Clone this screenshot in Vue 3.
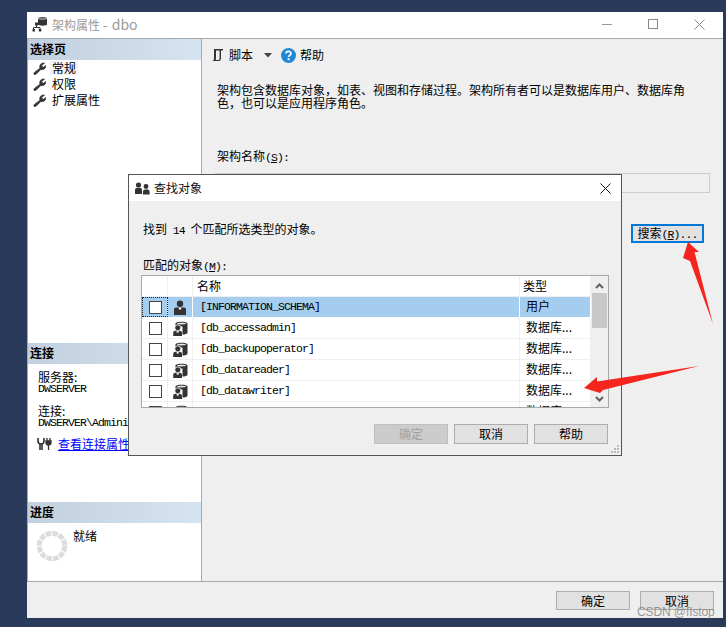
<script setup>
const pages = ['常规', '权限', '扩展属性']
const rows = [
  { name: '[INFORMATION_SCHEMA]', type: '用户', user: true, sel: true },
  { name: '[db_accessadmin]', type: '数据库...' },
  { name: '[db_backupoperator]', type: '数据库...' },
  { name: '[db_datareader]', type: '数据库...' },
  { name: '[db_datawriter]', type: '数据库...' },
  { name: '[db_ddladmin]', type: '数据库...' }
]
const wrench = 'M11.5 1.2 C9.4 .6 7.2 1.8 6.8 3.9 C6.6 4.8 6.8 5.6 7 6.2 L1.4 10.4 C.4 11.2 .9 12.6 2 12.6 C2.6 12.7 3 12.4 3.3 12 L7.9 7.4 C9.6 8 11.6 7.4 12.4 5.8 C12.8 5 12.9 4.1 12.7 3.4 L10.6 5.2 L8.8 4.4 L8.9 3 Z'
</script>

<template>
  <div class="page">
    <div class="window">
      <header class="title">
        <svg class="title-icon" width="16" height="16" viewBox="0 0 16 16">
          <path d="M6 2.2 C6 .8 15 .8 15 2.2 V8.5 C15 10 6 10 6 8.5 Z" fill="#333" />
          <path d="M6 2.2 C6 3.4 15 3.4 15 2.2" fill="none" stroke="#fff" stroke-width=".8" />
          <path d="M4.5 8 V11 M1.5 14 V11.5 H8 V14" fill="none" stroke="#333" />
          <rect x="3" y="6.5" width="3" height="3" fill="#333" />
          <rect x=".5" y="13" width="2.5" height="2.5" fill="#333" />
          <rect x="6.8" y="13" width="2.5" height="2.5" fill="#333" />
        </svg>
        <span class="title-text">架构属性 <span class="title-lat">- dbo</span></span>
        <div class="controls">
          <svg width="11" height="11" viewBox="0 0 11 11"><path d="M0 5.5 H10" stroke="#999" /></svg>
          <svg width="11" height="11" viewBox="0 0 11 11"><rect x=".5" y=".5" width="9" height="9" fill="none" stroke="#888" /></svg>
          <svg width="11" height="11" viewBox="0 0 11 11"><path d="M.5 .5 L10.5 10.5 M10.5 .5 L.5 10.5" stroke="#888" /></svg>
        </div>
      </header>

      <div class="main">
        <aside class="left">
          <section class="sec-pages">
            <h3 class="sec-head">选择页</h3>
            <ul class="page-list">
              <li v-for="(p, i) in pages" :key="p" class="page-item">
                <svg width="13" height="13" viewBox="0 0 13 13"><path :d="wrench" fill="#333" stroke="#333" stroke-width=".7" /></svg>
                <span :class="{ hovered: i === 0 }">{{ p }}</span>
              </li>
            </ul>
          </section>
          <section class="sec-conn">
            <h3 class="sec-head">连接</h3>
            <div class="conn-body">
              <div class="cn">服务器:</div>
              <div class="m">DWSERVER</div>
              <div class="cn conn-gap">连接:</div>
              <div class="m">DWSERVER\Administrator</div>
              <div class="conn-link">
                <svg width="15" height="14" viewBox="0 0 15 14">
                  <path d="M1 1 V4 C1 6 2.5 7 4 7 C5.5 7 7 6 7 4 V1 M3 7 V13 M5 7 V13" fill="none" stroke="#333" stroke-width="1.6" />
                  <path d="M9 4 H14 V5.5 C14 7 13 8 11.5 8 C10 8 9 7 9 5.5 Z M10 1 V4 M13 1 V4 M11.5 8 V13" fill="#333" stroke="#333" stroke-width="1.3" />
                </svg>
                <a class="link">查看连接属性</a>
              </div>
            </div>
          </section>
          <section class="sec-prog">
            <h3 class="sec-head">进度</h3>
            <div class="prog-body">
              <svg width="32" height="32" viewBox="0 0 32 32">
                <circle cx="16" cy="16" r="12.8" fill="none" stroke="#dcdcdc" stroke-width="5" stroke-dasharray="5.5 1.2" />
              </svg>
              <span class="ready">就绪</span>
            </div>
          </section>
        </aside>

        <div class="right">
          <div class="toolbar">
            <svg width="13" height="14" viewBox="0 0 13 14">
              <path d="M3.5 1 H12 V2.5 H10 V10.5 C10 12 9 13 8 13 H1 C2 13 3 12 3 10.5 V2.5 C3 1.5 3 1 3.5 1 Z M5 2.5 V10.5 C5 11 4.8 11.6 4.6 11.9 H7.5 C8.2 11.9 8.6 11.2 8.6 10.5 V2.5 Z" fill="#333" fill-rule="evenodd" />
            </svg>
            <span class="tb-script">脚本</span>
            <svg class="tb-caret" width="8" height="5" viewBox="0 0 8 5"><path d="M0 0 H8 L4 4.5 Z" fill="#444" /></svg>
            <svg class="tb-help" width="15" height="15" viewBox="0 0 15 15">
              <circle cx="7.5" cy="7.5" r="7.5" fill="#1e88d6" />
              <path d="M5 5.6 C5 2.6 10 2.6 10 5.5 C10 7.2 7.6 7.3 7.6 9" fill="none" stroke="#fff" stroke-width="1.8" />
              <rect x="6.6" y="10.2" width="2" height="2" fill="#fff" />
            </svg>
            <span>帮助</span>
          </div>
          <p class="desc">架构包含数据库对象，如表、视图和存储过程。架构所有者可以是数据库用户、数据库角色，也可以是应用程序角色。</p>
          <div class="name-label">架构名称<span class="m">(<u>S</u>):</span></div>
          <div class="name-input"></div>
          <button class="search">搜索<span class="m">(<u>R</u>)...</span></button>
        </div>
      </div>

      <footer class="foot">
        <button class="btn">确定</button>
        <button class="btn">取消</button>
      </footer>
    </div>

    <div class="dialog">
      <header class="dlg-title">
        <svg width="15" height="13" viewBox="0 0 15 13">
          <circle cx="3.5" cy="3" r="2.6" fill="#333" />
          <path d="M0 12 V8 C0 6.5 1 6 2 6 H5 C6 6 7 6.5 7 8 V12 Z" fill="#333" />
          <circle cx="11" cy="4.5" r="2.4" fill="#333" />
          <path d="M8 12.5 V9.5 C8 8.2 9 7.5 10 7.5 H12.5 C13.5 7.5 14.6 8.2 14.6 9.5 V12.5 Z" fill="#333" />
        </svg>
        <span class="dlg-name">查找对象</span>
        <svg class="dlg-close" width="11" height="11" viewBox="0 0 11 11"><path d="M.5 .5 L10.5 10.5 M10.5 .5 L.5 10.5" stroke="#111" /></svg>
      </header>
      <div class="dlg-body">
        <div class="found">找到 <span class="m count">14</span> 个匹配所选类型的对象。</div>
        <div class="match-label">匹配的对象<span class="m">(<u>M</u>):</span></div>
        <div class="table">
          <div class="tbl-main">
            <div class="row head">
              <div class="c1"></div>
              <div class="c2"></div>
              <div class="c3">名称</div>
              <div class="c4">类型</div>
            </div>
            <div v-for="r in rows" :key="r.name" class="row" :class="{ sel: r.sel }">
              <div class="c1"><span class="check"></span></div>
              <div class="c2">
                <svg v-if="r.user" width="14" height="15" viewBox="0 0 14 15">
                  <circle cx="7" cy="3.8" r="3.2" fill="#333" />
                  <path d="M1 15 V9.5 C1 8 2 7.5 3.5 7.5 H10.5 C12 7.5 13 8 13 9.5 V15 Z" fill="#333" />
                  <rect x="5.8" y="7.5" width="2.4" height="2" fill="#fff" />
                </svg>
                <svg v-else width="15" height="15" viewBox="0 0 15 15">
                  <path d="M2.5 2.5 C2.5 .2 14.5 .2 14.5 2.5 V11.5 C14.5 13 12 13.6 9.500 13.600 V5.500 H2.500 Z" fill="#333" />
                  <path d="M4 2.600 C4 1.400 13 1.400 13 2.600 C13 3.800 4 3.800 4 2.600 Z" fill="#e8e8e8" />
                  <circle cx="4.800" cy="6.800" r="3" fill="#333" stroke="#fff" stroke-width=".8" />
                  <path d="M.2 15 V11.800 C.2 10.500 1.200 9.800 2.400 9.800 H6.600 C7.800 9.800 9 10.500 9 11.800 V15 Z" fill="#333" />
                  <rect x="3.700" y="9.800" width="2" height="1.800" fill="#fff" />
                </svg>
              </div>
              <div class="c3 m name">{{ r.name }}</div>
              <div class="c4 type">{{ r.type }}</div>
            </div>
          </div>
          <div class="scroll">
            <svg class="arrow-up" width="9" height="6" viewBox="0 0 9 6"><path d="M1 5 L4.5 1.5 L8 5" fill="none" stroke="#606060" stroke-width="2" /></svg>
            <div class="thumb"></div>
            <svg class="arrow-down" width="9" height="6" viewBox="0 0 9 6"><path d="M1 1 L4.5 4.5 L8 1" fill="none" stroke="#606060" stroke-width="2" /></svg>
          </div>
        </div>
        <div class="dlg-btns">
          <button class="btn disabled">确定</button>
          <button class="btn">取消</button>
          <button class="btn">帮助</button>
        </div>
      </div>
      <svg class="grip" width="9" height="9" viewBox="0 0 9 9">
        <path d="M6 0h2v2H6zM3 3h2v2H3zM6 3h2v2H6zM0 6h2v2H0zM3 6h2v2H3zM6 6h2v2H6z" fill="#bbb" />
      </svg>
    </div>

    <svg class="arrows" width="726" height="627" viewBox="0 0 726 627">
      <path d="M688 242 L699 252 L694.500 252 L713 324 L690 261 L683 258 Z" fill="#f5241c" />
      <path d="M584 388 L597 377 L597 381.500 L699 366 L603 390 L600 393 Z" fill="#f5241c" />
    </svg>
    <div class="mark">CSDN @fIstop</div>
  </div>
</template>

<style scoped>
.page {
  position: relative;
  box-sizing: border-box;
  width: 726px;
  height: 627px;
  padding: 12px 3px 9px 27px;
  overflow: hidden;
  background: #2a3a5a;
  color: #000;
  font: 12px/14px "Noto Sans CJK SC", sans-serif;
}
.m {
  font-family: "Liberation Mono", "Noto Sans CJK SC", monospace;
  font-size: 11.5px;
  letter-spacing: -0.9px;
}
.window {
  display: flex;
  flex-direction: column;
  height: 606px;
  background: #efefef;
}
.title {
  display: flex;
  align-items: center;
  box-sizing: border-box;
  height: 26px;
  padding: 0 0 2px 5px;
  background: #fff;
}
.title-text {
  margin-left: 4px;
  color: #9a9a9a;
  font-size: 12px;
}
.title-lat {
  font-size: 14px;
  word-spacing: 1px;
}
.controls {
  display: flex;
  gap: 35px;
  margin-left: auto;
  padding-right: 18px;
}
.main {
  display: flex;
  height: 544px;
  border-top: 1px solid #a8a8a8;
  border-bottom: 1px solid #a8a8a8;
  box-sizing: border-box;
}
.left {
  display: flex;
  flex-direction: column;
  flex: none;
  box-sizing: border-box;
  width: 175px;
  border-left: 1px solid #a8a8a8;
  border-right: 1px solid #a8a8a8;
  background: #fff;
}
.sec-pages { height: 304px; }
.sec-conn { height: 159px; }
.sec-prog { flex: 1; }
.sec-head {
  height: 21px;
  margin: 0;
  padding-left: 2px;
  background: linear-gradient(90deg, #c2d0df, #d6e3f0);
  font-size: 12px;
  font-weight: 700;
  line-height: 19px;
}
.page-list {
  margin: 0;
  padding: 0 0 0 5px;
  list-style: none;
}
.page-item {
  display: flex;
  align-items: center;
  gap: 5px;
  height: 16px;
}
.page-item span {
  padding: 0 2px;
  margin-left: -1px;
}
.hovered { background: #f2f2f2; }
.conn-body {
  padding: 7px 0 0 10px;
  white-space: nowrap;
}
.conn-body .cn,
.conn-body .m { line-height: 12px; }
.conn-gap { margin-top: 10px; }
.conn-link {
  display: flex;
  align-items: center;
  gap: 6px;
  margin-top: 8px;
  margin-left: -1px;
}
.link {
  color: #00f;
  text-decoration: underline;
}
.prog-body {
  display: flex;
  align-items: flex-start;
  padding: 7px 0 0 8px;
}
.ready {
  margin: -1px 0 0 5px;
}
.right {
  flex: 1;
  display: flex;
  flex-direction: column;
  min-width: 0;
  padding-top: 6px;
}
.toolbar {
  display: flex;
  align-items: center;
  height: 20px;
  padding-left: 9px;
}
.tb-script { margin-left: 5px; }
.tb-caret { margin-left: 11px; }
.tb-help { margin: 0 4px 0 9px; }
.desc {
  width: 472px;
  margin: 18px 0 0 15px;
  line-height: 13px;
}
.name-label {
  margin: 40px 0 0 15px;
  height: 14px;
}
.name-input {
  box-sizing: border-box;
  width: 495px;
  height: 20px;
  margin: 10px 0 0 13px;
  border: 1px solid #ccc;
  background: #efefef;
}
.search {
  box-sizing: border-box;
  width: 73px;
  height: 19px;
  margin: 31px 0 0 429px;
  padding: 0;
  border: 2px solid #0078d7;
  background: #e1e1e1;
  color: #000;
  font: inherit;
  line-height: 14px;
}
.foot {
  display: flex;
  flex: 1;
  justify-content: flex-end;
  gap: 10px;
  padding: 9px 9px 0 0;
}
.btn {
  box-sizing: border-box;
  width: 74px;
  height: 20px;
  padding: 0;
  border: 1px solid #adadad;
  background: #e1e1e1;
  color: #000;
  font: inherit;
}
.foot .btn { height: 19px; }
.btn.disabled {
  border-color: #bfbfbf;
  background: #ccc;
  color: #a0a0a0;
}
.dialog {
  position: absolute;
  left: 128px;
  top: 174px;
  box-sizing: border-box;
  width: 494px;
  height: 282px;
  border: 1px solid #555;
  background: #efefef;
}
.dlg-title {
  display: flex;
  align-items: center;
  height: 26px;
  padding-left: 6px;
  background: #fff;
}
.dlg-name {
  margin-left: 4px;
  color: #111;
}
.dlg-close {
  margin-left: auto;
  margin-right: 10px;
}
.dlg-body {
  padding: 21px 13px 0 14px;
}
.found { height: 14px; }
.count { margin: 0 3px; }
.match-label {
  height: 14px;
  margin-top: 22px;
}
.table {
  display: flex;
  box-sizing: border-box;
  width: 468px;
  height: 133px;
  margin: 3px 0 0 -2px;
  border: 1px solid #a8a8a8;
  background: #fff;
}
.tbl-main {
  flex: 1;
  overflow: hidden;
}
.row {
  display: grid;
  grid-template-columns: 26px 25px 327px 71px;
  height: 21px;
  box-sizing: border-box;
  border-bottom: 1px solid #efefef;
}
.row > div {
  display: flex;
  align-items: center;
  box-sizing: border-box;
  border-right: 1px solid #efefef;
  overflow: hidden;
  white-space: nowrap;
}
.c1, .c2 { justify-content: center; }
.c1 { padding-left: 1px; }
.c3 { padding-left: 7px; }
.c4 { padding-left: 3px; }
.row.head > div { padding-bottom: 1px; }
.row.head .c3 { padding-left: 4px; }
.row.sel { background: #a4cdf0; border-bottom-color: #fff; }
.row.sel > div { border-right-color: #fff; }
.row.sel .c1 { outline: 1px dotted #222; outline-offset: -1px; }
.row.sel .check { background: #fff; }
.check {
  box-sizing: border-box;
  width: 13px;
  height: 13px;
  border: 1px solid #444;
}
.row > .type { padding: 0 0 2px 6px; }
.scroll {
  display: flex;
  flex-direction: column;
  align-items: center;
  flex: none;
  box-sizing: border-box;
  width: 17px;
  background: #efefef;
}
.arrow-up { margin-top: 7px; }
.thumb {
  flex: none;
  width: 15px;
  height: 35px;
  margin-top: 4px;
  background: #c8c8c8;
}
.arrow-down { margin-top: auto; margin-bottom: 5px; }
.dlg-btns {
  display: flex;
  justify-content: flex-end;
  gap: 6px;
  margin-top: 16px;
}
.grip {
  position: absolute;
  right: 1px;
  bottom: 1px;
}
.arrows {
  position: absolute;
  left: 0;
  top: 0;
  pointer-events: none;
}
.mark {
  position: absolute;
  left: 637px;
  top: 604px;
  color: rgba(120, 120, 120, .75);
  font: 12px/16px "Liberation Sans", sans-serif;
  letter-spacing: -0.1px;
  white-space: nowrap;
}
</style>

<style>
html, body { background: #2a3a5a; }
</style>
